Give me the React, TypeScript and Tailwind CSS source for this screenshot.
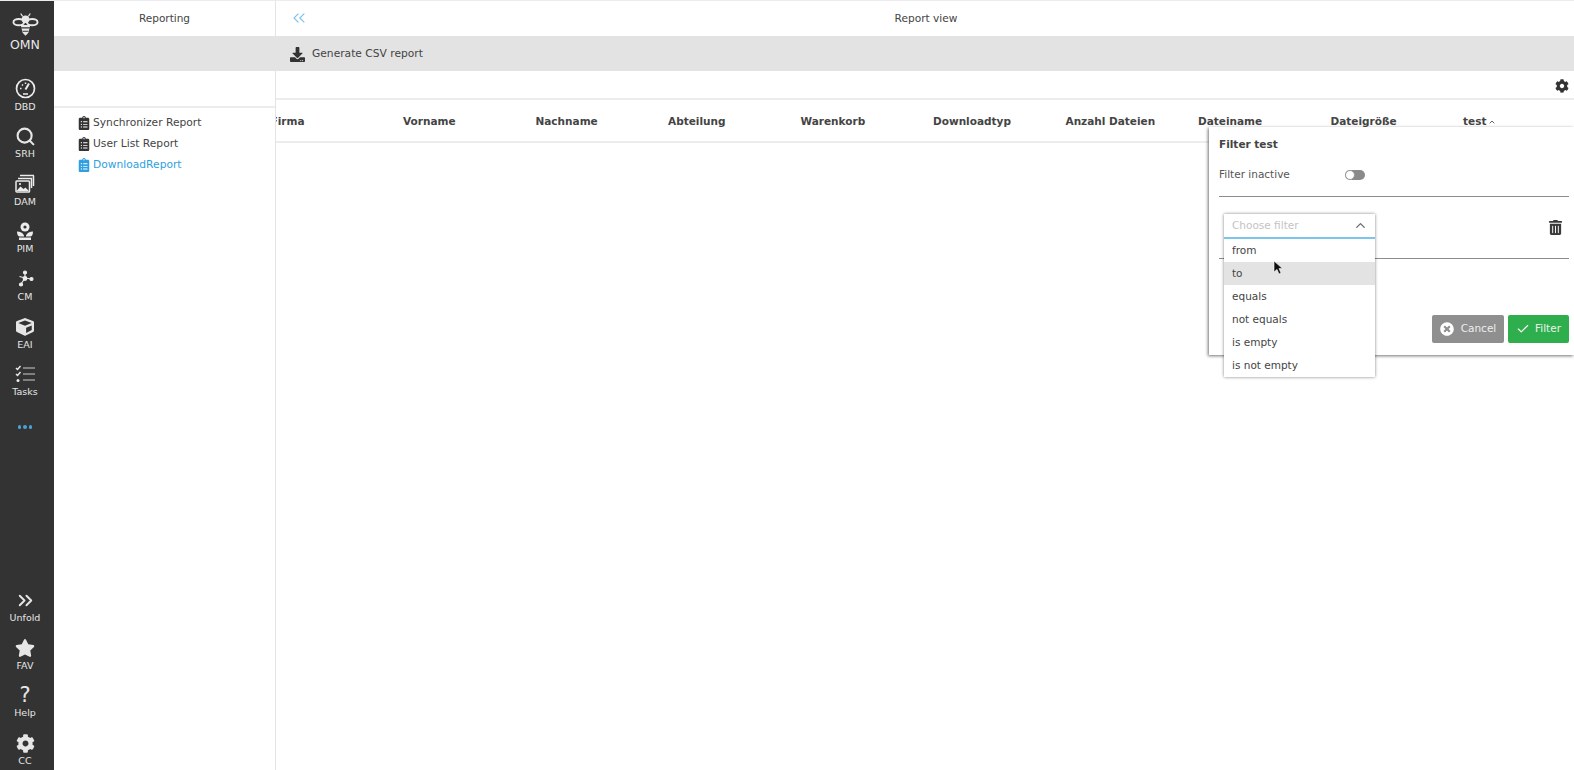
import { ReactNode } from 'react';
import { ChevronsLeft, ChevronsRight, ChevronUp, Check, Search } from 'lucide-react';
import { FaClipboardList, FaCog, FaCube, FaDownload, FaStar, FaTimesCircle, FaTrashAlt } from 'react-icons/fa';

const BeeLogo = () => (
  <svg width="27" height="25" viewBox="0 0 28 25" fill="none" stroke="#e8e8e8" strokeWidth="2">
    <ellipse cx="7" cy="9" rx="5.5" ry="3.2" />
    <ellipse cx="21" cy="9" rx="5.5" ry="3.2" />
    <path d="M9 12h10l-2 8-3 3-3-3z" fill="#e8e8e8" stroke="none" />
    <path d="M9.5 15h9M11 18.5h6" stroke="#333333" strokeWidth="1.2" />
    <circle cx="14" cy="6" r="4" fill="#e8e8e8" stroke="none" />
    <path d="M11 3 9 0M17 3l2-3" strokeWidth="1.2" />
  </svg>
);

const GaugeIcon = () => (
  <svg width="21" height="21" viewBox="0 0 21 21" fill="none" stroke="#ececec" strokeWidth="1.7">
    <circle cx="10.5" cy="10.5" r="9" />
    <path d="M10.5 11.5 14 5.5" strokeWidth="2" />
    <path d="M5 10.5h1.5M7 6.5l1 1M10.5 4.5V6M8 16h5" strokeWidth="1.5" />
  </svg>
);

const ImagesIcon = () => (
  <svg width="20" height="19" viewBox="0 0 20 19" fill="none" stroke="#ececec" strokeWidth="1.5">
    <path d="M5 1.5h14M18.5 1.5V12" />
    <path d="M3 4.5h13.5V14" />
    <rect x="1" y="7" width="13.5" height="11" rx="0.8" />
    <path d="M1.5 17l4-4.5 3 2.5 2-1.5 3.5 3.5z" fill="#ececec" stroke="none" />
    <circle cx="5" cy="10" r="1.1" fill="#ececec" stroke="none" />
  </svg>
);

const PimIcon = () => (
  <svg width="18" height="19" viewBox="0 0 18 19" fill="#ececec">
    <circle cx="9" cy="5" r="4.5" />
    <circle cx="9" cy="5" r="1.6" fill="#333333" />
    <path d="M1 9.5c3 0 6 1.5 7 4v1H4c-2 0-3-2-3-5zM17 9.5c-3 0-6 1.5-7 4v1h4c2 0 3-2 3-5zM3 15.5h12V18H3z" />
  </svg>
);

const NetworkIcon = () => (
  <svg width="17" height="18" viewBox="0 0 17 18" fill="#ececec" stroke="#ececec" strokeWidth="1.2">
    <path d="M8 2v6M8 8l6 1M8 8 4 14M8 8 2.5 6.5" fill="none" />
    <circle cx="8" cy="2.5" r="1.5" />
    <circle cx="8" cy="8.5" r="1.8" />
    <circle cx="14.5" cy="9" r="1.5" />
    <circle cx="4" cy="14.5" r="1.5" />
  </svg>
);

const TasksIcon = () => (
  <svg width="21" height="18" viewBox="0 0 21 18" fill="none">
    <path d="M1 3l1.5 1.5L5.5 1M1 9l1.5 1.5L5.5 7" stroke="#ececec" strokeWidth="1.4" />
    <circle cx="3" cy="15.5" r="1.5" fill="#ececec" />
    <path d="M8 3h12M8 9h12M8 15h12" stroke="#9a9a9a" strokeWidth="1.4" />
  </svg>
);

const NavItem = ({ icon, label }: { icon: ReactNode; label: string }) => (
  <div className="h-[47.6px] flex flex-col items-center justify-end text-[#e6e6e6]">
    <div className="h-[22px] flex items-center justify-center">{icon}</div>
    <div className="text-[9.5px] leading-[14px] mb-[1px]">{label}</div>
  </div>
);

const Sidebar = () => (
  <div className="w-[54px] shrink-0 bg-[#333333] flex flex-col pr-[4px]">
    <div className="h-[66px] flex flex-col items-center pt-[12px] text-[#e8e8e8]">
      <BeeLogo />
      <div className="text-[12.5px] leading-[12px] mt-[1px]">OMN</div>
    </div>
    <NavItem icon={<GaugeIcon />} label="DBD" />
    <NavItem icon={<Search size={21} strokeWidth={2.4} />} label="SRH" />
    <NavItem icon={<ImagesIcon />} label="DAM" />
    <NavItem icon={<PimIcon />} label="PIM" />
    <NavItem icon={<NetworkIcon />} label="CM" />
    <NavItem icon={<FaCube size={18} />} label="EAI" />
    <NavItem icon={<TasksIcon />} label="Tasks" />
    <div className="h-[36px] pt-[18px] flex items-center justify-center gap-[2px]">
      <span className="w-[3.5px] h-[3.5px] rounded-full bg-[#4aa3d8]" />
      <span className="w-[3.5px] h-[3.5px] rounded-full bg-[#4aa3d8]" />
      <span className="w-[3.5px] h-[3.5px] rounded-full bg-[#4aa3d8]" />
    </div>
    <div className="mt-auto mb-[1px]">
      <NavItem icon={<ChevronsRight size={23} strokeWidth={2} />} label="Unfold" />
      <NavItem icon={<FaStar size={20} />} label="FAV" />
      <NavItem icon={<span className="text-[21px] leading-none">?</span>} label="Help" />
      <NavItem icon={<FaCog size={19} />} label="CC" />
    </div>
  </div>
);

const reports = [
  { name: 'Synchronizer Report', active: false },
  { name: 'User List Report', active: false },
  { name: 'DownloadReport', active: true },
];

const ReportList = () => (
  <div className="w-[222px] shrink-0 border-r border-[#e4e4e4] flex flex-col">
    <div className="h-[35px] flex items-center justify-center text-[#444] text-[10.5px]">Reporting</div>
    <div className="h-[35px] bg-[#e3e3e3]" />
    <div className="h-[37px] border-b-2 border-[#ececec]" />
    <div className="pl-[23px] pt-[4px]">
      {reports.map((r) => (
        <div
          key={r.name}
          className={`h-[21.3px] flex items-center gap-[2px] text-[10.7px] ${r.active ? 'text-[#2f9fe0]' : 'text-[#444]'}`}
        >
          <FaClipboardList size={14} className={r.active ? 'text-[#2f9fe0]' : 'text-[#333]'} />
          {r.name}
        </div>
      ))}
    </div>
  </div>
);

const columns = ['Firma', 'Vorname', 'Nachname', 'Abteilung', 'Warenkorb', 'Downloadtyp', 'Anzahl Dateien', 'Dateiname', 'Dateigröße'];

const FilterPopup = () => (
  <div className="absolute left-[933px] top-[126px] w-[365px] h-[228px] bg-white shadow-[-1px_1px_3px_rgba(0,0,0,0.55)] pl-[10px] pr-[5px]">
    <div className="pt-[10px] text-[10.5px] leading-[14px] font-bold text-[#444]">Filter test</div>
    <div className="flex items-center h-[40px] mt-[6px] pb-[3px] border-b border-[#8c8c8c]">
      <span className="w-[126px] text-[10.5px] text-[#555]">Filter inactive</span>
      <span className="w-[20px] h-[10px] rounded-full bg-[#8a8a8a] relative">
        <span className="absolute left-0 top-0 w-[10px] h-[10px] rounded-full bg-white border border-[#999]" />
      </span>
    </div>
    <div className="relative h-[62px] border-b border-[#8c8c8c] flex items-start justify-end pt-[23px] pr-[6px]">
      <FaTrashAlt size={15} className="text-[#3a3a3a]" />
      {/* dropdown hangs over the buttons row */}
      <div className="absolute left-[5px] top-[17px] w-[151px] bg-white shadow-[0_0_3px_rgba(0,0,0,0.5)] text-[10.5px] text-[#444] z-10">
        <div className="h-[25px] flex items-center justify-between pl-[8px] pr-[7px] border-b-2 border-[#7cc6ee] text-[#c4c4c4]">
          Choose filter
          <ChevronUp size={15} className="text-[#666]" />
        </div>
        {['from', 'to', 'equals', 'not equals', 'is empty', 'is not empty'].map((o) => (
          <div key={o} className={`h-[23px] flex items-center pl-[8px] ${o === 'to' ? 'bg-[#e3e3e3]' : ''}`}>
            {o}
          </div>
        ))}
      </div>
    </div>
    <div className="flex justify-end gap-[4px] mt-[56px]">
      <div className="w-[72px] h-[28px] rounded-[2px] bg-[#8f8f8f] text-[#eee] text-[10.5px] flex items-center justify-center gap-[7px]">
        <FaTimesCircle size={14} className="text-white" />
        Cancel
      </div>
      <div className="w-[61px] h-[28px] rounded-[2px] bg-[#2fae4e] text-[#e6f5e9] text-[10.5px] flex items-center justify-center gap-[5px]">
        <Check size={14} className="text-white" />
        Filter
      </div>
    </div>
  </div>
);

const Cursor = () => (
  <svg className="absolute left-[997px] top-[259px] z-20" width="10" height="15" viewBox="0 0 10 15">
    <path d="M1 1v11l3-2.6L6 14l2-1-2-4.4h3.5z" fill="#111" stroke="#fff" strokeWidth="0.6" />
  </svg>
);

const ReportView = () => (
  <div className="relative flex-1 min-w-0 flex flex-col overflow-hidden">
    <div className="h-[35px] relative flex items-center justify-center text-[#444] text-[10.6px] pl-[2px]">
      <ChevronsLeft size={20} strokeWidth={1.3} className="absolute left-[13px] top-[7px] text-[#7cc0ea]" />
      Report view
    </div>
    <div className="h-[35px] bg-[#e3e3e3] flex items-center pl-[14px] pt-[1px] gap-[7px] text-[#444] text-[10.7px]">
      <FaDownload size={15} className="text-[#333]" />
      Generate CSV report
    </div>
    <div className="h-[27px] flex items-center justify-end pr-[5px] pt-[3px]">
      <FaCog size={14} className="text-[#333]" />
    </div>
    <div className="h-[45px] border-y-2 border-[#ececec] pt-[2px] flex items-center ml-[-5.5px] text-[10.5px] font-bold text-[#444]">
      {columns.map((c) => (
        <div key={c} className="w-[132.5px] shrink-0">
          {c}
        </div>
      ))}
      <div className="flex items-center gap-[2px]">
        test
        <ChevronUp size={8} strokeWidth={2.5} />
      </div>
    </div>
    <FilterPopup />
    <Cursor />
  </div>
);

export default function App() {
  return (
    <div
      className="h-[770px] w-[1574px] flex bg-white overflow-hidden border-t border-[#ececf0]"
      style={{ fontFamily: '"DejaVu Sans", sans-serif' }}
    >
      <Sidebar />
      <ReportList />
      <ReportView />
    </div>
  );
}
